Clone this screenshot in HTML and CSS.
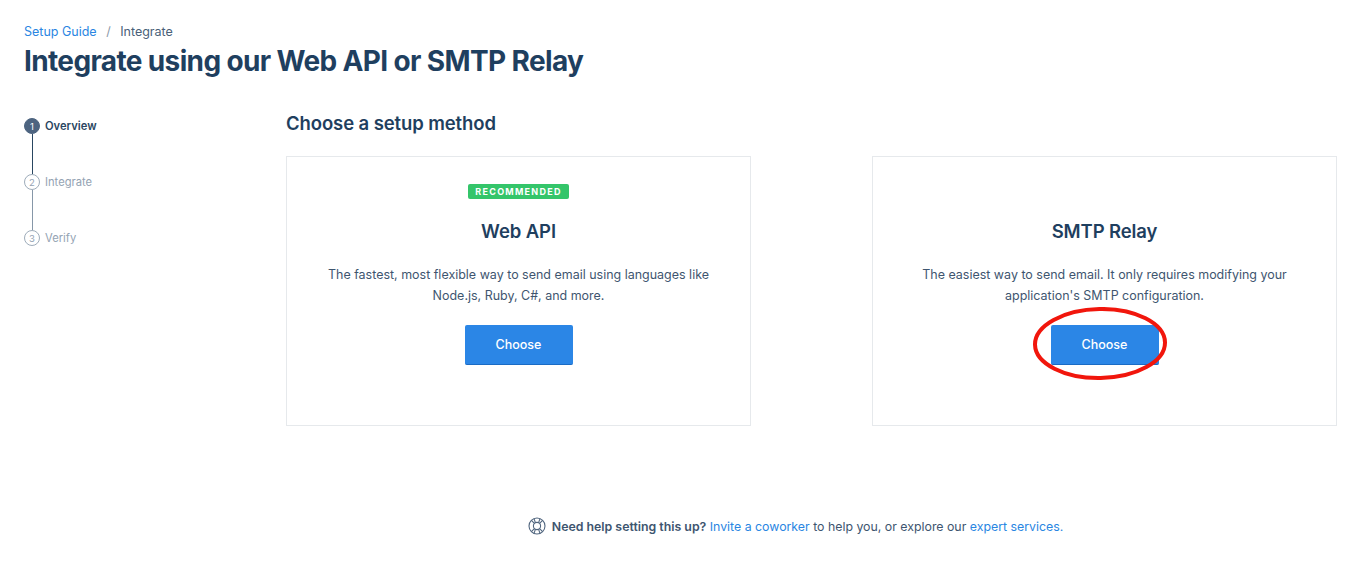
FILE: index.html
```html
<!DOCTYPE html>
<html lang="en">
<head>
<meta charset="utf-8">
<title>Integrate</title>
<link rel="stylesheet" href="styles.css">
</head>
<body>
<div class="page">
  <header class="head">
    <nav class="crumbs"><a class="link" href="#">Setup Guide</a><span class="sep">/</span><span>Integrate</span></nav>
    <h1 class="title">Integrate using our Web API or SMTP Relay</h1>
  </header>
  <div class="content">
    <ol class="steps">
      <li class="step active"><span class="dot">1</span><span class="step-label">Overview</span></li>
      <li class="line line-active"></li>
      <li class="step"><span class="dot">2</span><span class="step-label">Integrate</span></li>
      <li class="line"></li>
      <li class="step"><span class="dot">3</span><span class="step-label">Verify</span></li>
    </ol>
    <main class="main">
      <h2 class="section">Choose a setup method</h2>
      <div class="cards">
        <section class="card">
          <div class="badge-row"><span class="badge">RECOMMENDED</span></div>
          <h3 class="card-title">Web API</h3>
          <p class="card-text">The fastest, most flexible way to send email using languages like<br>Node.js, Ruby, C#, and more.</p>
          <button class="btn">Choose</button>
        </section>
        <section class="card">
          <div class="badge-row"></div>
          <h3 class="card-title">SMTP Relay</h3>
          <p class="card-text">The easiest way to send email. It only requires modifying your<br>application's SMTP configuration.</p>
          <div class="btn-wrap">
            <button class="btn">Choose</button>
            <svg class="circle" width="137" height="74" viewBox="0 0 137 74" aria-hidden="true"><ellipse cx="68" cy="36.5" rx="65" ry="34.5" transform="rotate(-1 68 36.5)" fill="none" stroke="#f1160c" stroke-width="4"/></svg>
          </div>
        </section>
      </div>
    </main>
  </div>
  <footer class="help">
    <svg class="help-icon" width="18" height="18" viewBox="0 0 18 18" aria-hidden="true"><g fill="none" stroke="#51667f" stroke-width="1.1"><circle cx="9" cy="9" r="8"/><circle cx="9" cy="9" r="3.6"/><path d="M3.4 3.4 6.4 6.4M14.6 3.4 11.6 6.4M3.4 14.6 6.4 11.6M14.6 14.6 11.6 11.6M6 1.6 7.4 5.6M12 1.6 10.6 5.6M6 16.4 7.4 12.4M12 16.4 10.6 12.4"/></g></svg>
    <span><strong class="help-strong">Need help setting this up?</strong> <a class="link" href="#">Invite a coworker</a> to help you, or explore our <a class="link" href="#">expert services.</a></span>
  </footer>
</div>
</body>
</html>
```
FILE: styles.css
```css
* { box-sizing: border-box; }
html, body { margin: 0; padding: 0; background: #fff; }
body { font-family: Inter, "Liberation Sans", sans-serif; color: #294661; }
.page { width: 1358px; height: 578px; padding: 23px 21px 0 24px; overflow: hidden; }
.link { color: #2a86e2; text-decoration: none; }
.crumbs { display: flex; align-items: center; height: 17px; font-size: 12.5px; line-height: 17px; color: #4a5f78; }
.sep { margin: 0 9.5px; color: #8a98a8; }
.title { margin: 3px 0 0; font-size: 28px; line-height: 36px; font-weight: 700; letter-spacing: -0.64px; color: #1f3f5f; }
.content { display: flex; margin-top: 30px; }
.steps { list-style: none; margin: 0; padding: 9px 0 0; width: 262px; flex: none; font-size: 11.2px; }
.step { display: flex; align-items: center; gap: 5px; height: 16px; color: #94a3b3; }
.active { color: #294661; font-weight: 600; }
.dot { display: flex; align-items: center; justify-content: center; width: 16px; height: 16px; border: 1px solid #9eacba; border-radius: 50%; font-size: 9.5px; font-weight: 400; }
.active .dot { background: #4d6480; border-color: #4d6480; color: #fff; }
.line { width: 1px; height: 40px; margin-left: 7.5px; background: #8697a8; }
.line-active { background: #294661; }
.main { flex: 1; min-width: 0; }
.section { margin: 0; font-size: 18.5px; line-height: 28px; font-weight: 600; letter-spacing: -0.1px; color: #1f3f5f; }
.cards { display: flex; gap: 121px; margin-top: 19px; }
.card { flex: 1; height: 270px; padding-top: 27px; border: 1px solid #e6e9ec; display: flex; flex-direction: column; align-items: center; text-align: center; }
.badge-row { display: flex; align-items: center; justify-content: center; height: 15px; }
.badge { display: block; padding: 0 7px; height: 15px; line-height: 15px; background: #34c56a; border-radius: 2px; color: #fff; font-size: 9px; font-weight: 700; letter-spacing: 1.25px; }
.card-title { margin: 18px 0 0; font-size: 18.5px; line-height: 28px; font-weight: 600; letter-spacing: -0.1px; color: #1f3f5f; }
.card-text { margin: 19px 0 0; font-size: 12.47px; line-height: 21px; color: #3e556f; }
.btn-wrap { position: relative; margin-top: 19px; }
.card-text + .btn { margin-top: 19px; }
.btn { display: block; width: 108px; height: 40px; padding: 0; border: 0; border-bottom: 1px solid #1a6bc4; border-radius: 2px; background: #2b86e6; color: #fff; font: 500 12.5px Inter, "Liberation Sans", sans-serif; }
.circle { position: absolute; left: -19px; top: -18px; }
.help { display: flex; align-items: center; justify-content: center; gap: 6px; margin-top: 90px; margin-left: 230px; height: 20px; font-size: 12.33px; color: #3e556f; }
.help-strong { font-weight: 600; color: #3e556f; }
.help-icon { flex: none; }
```
